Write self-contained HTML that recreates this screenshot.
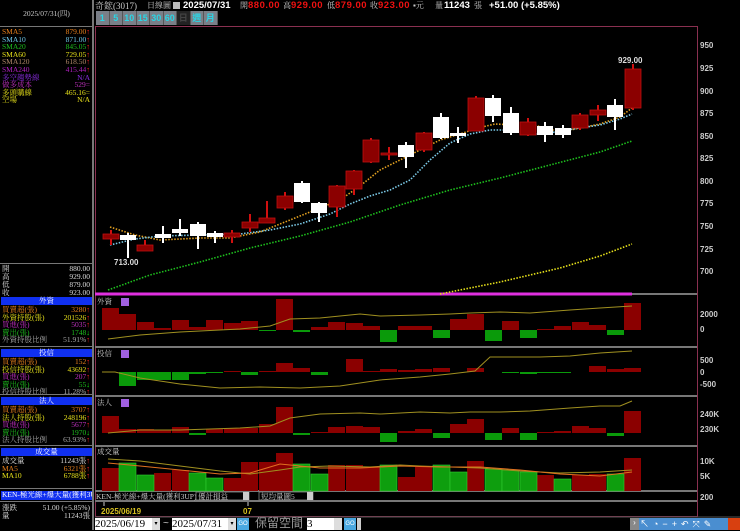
<!DOCTYPE html>
<html><head><meta charset="utf-8"><style>
*{margin:0;padding:0;box-sizing:border-box}
body{width:740px;height:530px;background:#000;overflow:hidden;position:relative;font-family:"Liberation Sans","Noto Sans CJK TC",sans-serif;color:#ddd}
.a{position:absolute;white-space:nowrap}
.s{font-family:"Liberation Serif","Noto Serif CJK SC",serif;font-size:7.5px;line-height:7.6px}
.r{position:absolute;left:2px;right:3px;height:7.6px}
.r span:last-child{position:absolute;right:0}
.hd{position:absolute;left:1px;width:91px;height:8px;background:#1030f0;color:#fff;font-size:7.5px;line-height:8px;text-align:center;font-family:"Liberation Serif","Noto Serif CJK SC",serif}
.btn{position:absolute;top:11px;height:14px;width:13.5px;background:#7a7f88;color:#29d6e6;font-weight:bold;font-size:9px;text-align:center;line-height:14px;border-right:1px solid #555}
.ax{position:absolute;left:700px;font-size:8px;font-weight:bold;color:#ccc}
.t{position:absolute;top:0;font-size:9.5px;line-height:11px;font-weight:bold;white-space:nowrap}
.c{position:absolute;top:1px;font-size:8px;line-height:10px;color:#ccc;font-family:"Liberation Serif","Noto Serif CJK SC",serif;white-space:nowrap}
</style></head><body>
<!-- top line -->
<div class="c" style="left:95px;font-size:9px">奇鋐(3017)</div>
<div class="c" style="left:147px">日線圖</div>
<div class="a" style="left:173px;top:2px;width:7px;height:7px;background:#bbb"></div>
<div class="t" style="left:183px;color:#fff">2025/07/31</div>
<div class="c" style="left:240px">開</div><div class="t" style="left:248px;color:#e11;letter-spacing:0.5px">880.00</div>
<div class="c" style="left:283px">高</div><div class="t" style="left:291px;color:#e11;letter-spacing:0.5px">929.00</div>
<div class="c" style="left:327px">低</div><div class="t" style="left:335px;color:#e11;letter-spacing:0.5px">879.00</div>
<div class="c" style="left:370px">收</div><div class="t" style="left:378px;color:#e11;letter-spacing:0.5px">923.00</div>
<div class="c" style="left:413px">▪元</div>
<div class="c" style="left:435px">量</div><div class="t" style="left:444px;color:#fff">11243</div>
<div class="c" style="left:474px">張</div>
<div class="t" style="left:489px;color:#fff">+51.00 (+5.85%)</div>

<div class="btn" style="left:96px">1</div><div class="btn" style="left:109.5px">5</div><div class="btn" style="left:123px">10</div><div class="btn" style="left:136.5px">15</div><div class="btn" style="left:150px">30</div><div class="btn" style="left:163.5px">60</div>
<div class="btn" style="left:177px;background:#222;color:#444">日</div><div class="btn" style="left:190.5px">週</div><div class="btn" style="left:204px">月</div>
<!-- left panel -->
<div class="a" style="left:0;top:0;width:94px;height:530px;border-right:2px solid #777"></div>
<div class="a" style="left:0;top:26px;width:93px;height:1px;background:#777"></div>
<div class="a s" style="left:0;top:10px;width:93px;text-align:center;color:#ccc">2025/07/31(四)</div>
<div class="a s" style="left:0;top:28px;width:93px;height:240px">
<div class="r" style="top:0;color:#e8801c"><span>SMA5</span><span>879.00<b style="color:#f22">↑</b></span></div>
<div class="r" style="top:7.6px;color:#6ec6e8"><span>SMA10</span><span>871.00<b style="color:#f22">↑</b></span></div>
<div class="r" style="top:15.2px;color:#1ec01e"><span>SMA20</span><span>845.05<b style="color:#f22">↑</b></span></div>
<div class="r" style="top:22.8px;color:#e6e01a"><span>SMA60</span><span>729.05<b style="color:#f22">↑</b></span></div>
<div class="r" style="top:30.4px;color:#b08868"><span>SMA120</span><span>618.50<b style="color:#f22">↑</b></span></div>
<div class="r" style="top:38px;color:#b020c0"><span>SMA240</span><span>415.44<b style="color:#f22">↑</b></span></div>
<div class="r" style="top:45.6px;color:#8a2ce0"><span>多空趨勢線</span><span>N/A</span></div>
<div class="r" style="top:53.2px;color:#c030c0"><span>做多成本</span><span>529=</span></div>
<div class="r" style="top:60.8px;color:#e6e01a"><span>多頭購線</span><span>465.16=</span></div>
<div class="r" style="top:68.4px;color:#e6e01a"><span>空場</span><span>N/A</span></div>
</div>
<div class="a" style="left:0;top:263px;width:93px;height:1px;background:#777"></div>
<div class="a s" style="left:0;top:265px;width:93px;height:40px;color:#ddd">
<div class="r" style="top:0"><span>開</span><span>880.00</span></div>
<div class="r" style="top:8px"><span>高</span><span>929.00</span></div>
<div class="r" style="top:16px"><span>低</span><span>879.00</span></div>
<div class="r" style="top:24px"><span>收</span><span>923.00</span></div>
</div>
<div class="hd" style="top:297px">外資</div>
<div class="a s" style="left:0;top:306px;width:93px;height:40px">
<div class="r" style="top:0;color:#e8801c"><span>買賣超(張)</span><span>3280<b style="color:#f22">↑</b></span></div>
<div class="r" style="top:7.6px;color:#e6e01a"><span>外資持股(張)</span><span>201526<b style="color:#f22">↑</b></span></div>
<div class="r" style="top:15.2px;color:#c030c0"><span>買進(張)</span><span>5035<b style="color:#f22">↑</b></span></div>
<div class="r" style="top:22.8px;color:#1ec01e"><span>賣出(張)</span><span>1748<b style="color:#1e1">↓</b></span></div>
<div class="r" style="top:30.4px;color:#aaa"><span>外資持股比例</span><span>51.91%<b style="color:#f22">↑</b></span></div>
</div>
<div class="a" style="left:0;top:346px;width:93px;height:1px;background:#777"></div>
<div class="hd" style="top:349px">投信</div>
<div class="a s" style="left:0;top:358px;width:93px;height:40px">
<div class="r" style="top:0;color:#e8801c"><span>買賣超(張)</span><span>152<b style="color:#f22">↑</b></span></div>
<div class="r" style="top:7.6px;color:#e6e01a"><span>投信持股(張)</span><span>43692<b style="color:#f22">↑</b></span></div>
<div class="r" style="top:15.2px;color:#c030c0"><span>買進(張)</span><span>207<b style="color:#f22">↑</b></span></div>
<div class="r" style="top:22.8px;color:#1ec01e"><span>賣出(張)</span><span>55<b style="color:#1e1">↓</b></span></div>
<div class="r" style="top:30.4px;color:#aaa"><span>投信持股比例</span><span>11.28%<b style="color:#f22">↑</b></span></div>
</div>
<div class="a" style="left:0;top:394px;width:93px;height:1px;background:#777"></div>
<div class="hd" style="top:397px">法人</div>
<div class="a s" style="left:0;top:406px;width:93px;height:40px">
<div class="r" style="top:0;color:#e8801c"><span>買賣超(張)</span><span>3707<b style="color:#f22">↑</b></span></div>
<div class="r" style="top:7.6px;color:#e6e01a"><span>法人持股(張)</span><span>248196<b style="color:#f22">↑</b></span></div>
<div class="r" style="top:15.2px;color:#c030c0"><span>買進(張)</span><span>5677<b style="color:#f22">↑</b></span></div>
<div class="r" style="top:22.8px;color:#1ec01e"><span>賣出(張)</span><span>1970<b style="color:#1e1">↓</b></span></div>
<div class="r" style="top:30.4px;color:#aaa"><span>法人持股比例</span><span>63.93%<b style="color:#f22">↑</b></span></div>
</div>
<div class="a" style="left:0;top:445px;width:93px;height:1px;background:#777"></div>
<div class="hd" style="top:448px">成交量</div>
<div class="a s" style="left:0;top:457px;width:93px;height:30px">
<div class="r" style="top:0;color:#ddd"><span>成交量</span><span>11243張<b style="color:#f22">↑</b></span></div>
<div class="r" style="top:7.6px;color:#e8801c"><span>MA5</span><span>6321張<b style="color:#f22">↑</b></span></div>
<div class="r" style="top:15.2px;color:#e6e01a"><span>MA10</span><span>6788張<b style="color:#f22">↑</b></span></div>
</div>
<div class="a" style="left:0;top:488px;width:93px;height:1px;background:#777"></div>
<div class="a s" style="left:1px;top:491px;width:91px;height:9px;background:#1030f0;color:#fff;padding-left:1px;overflow:hidden">KEN-極光線+爆大量(獲利3UP)</div>
<div class="a" style="left:0;top:501px;width:93px;height:1px;background:#777"></div>
<div class="a s" style="left:0;top:504px;width:93px;color:#ddd">
<div class="r" style="top:0"><span>漲跌</span><span>51.00 (+5.85%)</span></div>
<div class="r" style="top:8px"><span>量</span><span>11243張</span></div>
</div>

<svg class="a" style="left:0;top:0" width="740" height="530">
<rect x="95.5" y="26.5" width="602" height="490" fill="none" stroke="#8a3050"/>
<line x1="95" y1="294" x2="632" y2="294" stroke="#e030e0" stroke-width="3"/>
<line x1="632" y1="294" x2="697" y2="294" stroke="#777" stroke-width="2"/>
<g stroke="#777" stroke-width="2">
<line x1="95" y1="347" x2="697" y2="347"/><line x1="95" y1="396" x2="697" y2="396"/><line x1="95" y1="446" x2="697" y2="446"/><line x1="95" y1="491" x2="697" y2="491"/><line x1="95" y1="501" x2="697" y2="501"/>
</g>
<g fill="none" stroke-dasharray="1.5 1.5" stroke-width="1.6">
<polyline stroke="#e2a020" points="110,227 135,235 160,240 200,238 230,238 260,232 285,222 310,212 340,200 360,186 380,170 400,160 420,150 440,140 460,134 478,128 495,124 515,125 530,124 545,128 560,132 580,128 600,124 620,117 632,108"/>
<polyline stroke="#7ccbe8" points="110,245 135,239 160,236 200,235 240,234 270,230 300,224 330,214 350,204 370,196 390,190 410,180 430,160 450,143 470,134 490,130 510,130 530,134 545,134 560,131 580,128 600,125 620,119 632,114"/>
<polyline stroke="#1ec01e" points="108,290 150,275 200,262 250,248 300,236 350,222 400,205 450,190 500,178 550,165 600,152 632,141"/>
<polyline stroke="#e6e01a" points="440,294 500,282 560,268 600,256 632,244"/>
</g>
<g stroke-width="2">
<g stroke="#d01010"><line x1="111" y1="230" x2="111" y2="245"/><line x1="145" y1="240" x2="145" y2="251"/><line x1="232" y1="230" x2="232" y2="243"/><line x1="250" y1="214" x2="250" y2="232"/><line x1="267" y1="201" x2="267" y2="223"/><line x1="285" y1="192" x2="285" y2="210"/><line x1="337" y1="185" x2="337" y2="217"/><line x1="354" y1="170" x2="354" y2="195"/><line x1="371" y1="138" x2="371" y2="163"/><line x1="389" y1="147" x2="389" y2="160"/><line x1="424" y1="132" x2="424" y2="152"/><line x1="476" y1="96" x2="476" y2="131"/><line x1="528" y1="118" x2="528" y2="136"/><line x1="580" y1="113" x2="580" y2="130"/><line x1="598" y1="105" x2="598" y2="121"/><line x1="633" y1="64" x2="633" y2="110"/></g>
<g stroke="#fff"><line x1="128" y1="233" x2="128" y2="258"/><line x1="163" y1="226" x2="163" y2="243"/><line x1="180" y1="219" x2="180" y2="236"/><line x1="198" y1="222" x2="198" y2="249"/><line x1="215" y1="231" x2="215" y2="243"/><line x1="302" y1="181" x2="302" y2="203"/><line x1="319" y1="202" x2="319" y2="222"/><line x1="406" y1="142" x2="406" y2="168"/><line x1="441" y1="113" x2="441" y2="139"/><line x1="458" y1="127" x2="458" y2="143"/><line x1="493" y1="95" x2="493" y2="122"/><line x1="511" y1="107" x2="511" y2="135"/><line x1="545" y1="122" x2="545" y2="142"/><line x1="563" y1="125" x2="563" y2="138"/><line x1="615" y1="99" x2="615" y2="130"/></g>
</g>
<g fill="#8b0000" stroke="#c01010" stroke-width="0.8">
<rect x="103" y="234" width="16" height="5"/><rect x="137" y="245" width="16" height="6"/><rect x="224" y="233" width="16" height="4"/><rect x="242" y="222" width="16" height="6"/><rect x="259" y="218" width="16" height="5"/><rect x="277" y="196" width="16" height="12"/><rect x="329" y="186" width="16" height="21"/><rect x="346" y="171" width="16" height="18"/><rect x="363" y="140" width="16" height="22"/><rect x="381" y="153" width="16" height="2"/><rect x="416" y="133" width="16" height="17"/><rect x="468" y="98" width="16" height="33"/><rect x="520" y="122" width="16" height="13"/><rect x="572" y="115" width="16" height="13"/><rect x="590" y="110" width="16" height="5"/><rect x="625" y="69" width="16" height="39"/>
</g>
<g fill="#fff">
<rect x="120" y="235" width="16" height="5"/><rect x="155" y="234" width="16" height="4"/><rect x="172" y="229" width="16" height="4"/><rect x="190" y="224" width="16" height="12"/><rect x="207" y="233" width="16" height="4"/><rect x="294" y="183" width="16" height="19"/><rect x="311" y="203" width="16" height="10"/><rect x="398" y="145" width="16" height="12"/><rect x="433" y="117" width="16" height="21"/><rect x="450" y="133" width="16" height="3"/><rect x="485" y="98" width="16" height="18"/><rect x="503" y="113" width="16" height="20"/><rect x="537" y="126" width="16" height="9"/><rect x="555" y="128" width="16" height="7"/><rect x="607" y="105" width="16" height="12"/>
</g>
<text x="618" y="63" fill="#ddd" font-size="8" font-weight="bold" font-family="Liberation Sans">929.00</text>
<text x="114" y="265" fill="#ddd" font-size="8" font-weight="bold" font-family="Liberation Sans">713.00</text>
<g font-size="7.5" fill="#ccc" font-family="Liberation Serif,Noto Serif CJK SC,serif">
<text x="97" y="304">外資</text><text x="97" y="356">投信</text><text x="97" y="405">法人</text><text x="97" y="454">成交量</text>
<text x="96" y="499">KEN-極光線+爆大量(獲利3UP)</text>
</g>
<g fill="#a060e0"><rect x="121" y="298" width="8" height="8"/><rect x="121" y="350" width="8" height="8"/><rect x="121" y="399" width="8" height="8"/></g>
<g fill="#8b0000"><rect x="102" y="308" width="17" height="22"/><rect x="119" y="314" width="17" height="16"/><rect x="137" y="322" width="17" height="8"/><rect x="154" y="328" width="17" height="2"/><rect x="172" y="320" width="17" height="10"/><rect x="189" y="327" width="17" height="3"/><rect x="206" y="320" width="17" height="10"/><rect x="224" y="323" width="17" height="7"/><rect x="241" y="321" width="17" height="9"/><rect x="276" y="299" width="17" height="31"/><rect x="311" y="327" width="17" height="3"/><rect x="328" y="322" width="17" height="8"/><rect x="346" y="323" width="17" height="7"/><rect x="363" y="326" width="17" height="4"/><rect x="398" y="326" width="17" height="4"/><rect x="415" y="326" width="17" height="4"/><rect x="450" y="319" width="17" height="11"/><rect x="467" y="314" width="17" height="16"/><rect x="502" y="321" width="17" height="9"/><rect x="537" y="329" width="17" height="1"/><rect x="554" y="326" width="17" height="4"/><rect x="572" y="322" width="17" height="8"/><rect x="589" y="325" width="17" height="5"/><rect x="624" y="303" width="17" height="27"/></g>
<g fill="#0a9a0a"><rect x="259" y="330" width="17" height="1"/><rect x="293" y="330" width="17" height="2"/><rect x="380" y="330" width="17" height="12"/><rect x="433" y="330" width="17" height="8"/><rect x="485" y="330" width="17" height="11"/><rect x="520" y="330" width="17" height="8"/><rect x="607" y="330" width="17" height="5"/></g>
<polyline fill="none" stroke="#a09020" points="108,339 140,335 180,332 240,329 270,326 290,319 320,318 360,314 380,316 420,315 450,314 470,313 500,312 530,313 570,310 600,308 632,306"/>
<g fill="#0a9a0a"><rect x="119" y="372" width="17" height="14"/><rect x="137" y="372" width="17" height="8"/><rect x="154" y="372" width="17" height="8"/><rect x="172" y="372" width="17" height="8"/><rect x="189" y="372" width="17" height="2"/><rect x="206" y="372" width="17" height="1"/><rect x="241" y="372" width="17" height="3"/><rect x="311" y="372" width="17" height="3"/><rect x="502" y="372" width="17" height="1"/><rect x="520" y="372" width="17" height="2"/><rect x="537" y="372" width="17" height="1"/><rect x="554" y="372" width="17" height="1"/></g>
<g fill="#8b0000"><rect x="224" y="371" width="17" height="1"/><rect x="259" y="371" width="17" height="1"/><rect x="276" y="363" width="17" height="9"/><rect x="293" y="368" width="17" height="4"/><rect x="346" y="359" width="17" height="13"/><rect x="363" y="371" width="17" height="1"/><rect x="380" y="369" width="17" height="3"/><rect x="398" y="370" width="17" height="2"/><rect x="415" y="369" width="17" height="3"/><rect x="433" y="368" width="17" height="4"/><rect x="467" y="368" width="17" height="4"/><rect x="589" y="366" width="17" height="6"/><rect x="607" y="369" width="17" height="3"/><rect x="624" y="368" width="17" height="4"/></g>
<polyline fill="none" stroke="#a09020" points="102,372 115,372 140,378 180,384 220,388 260,387 300,388 340,386 380,380 420,377 450,374 475,371 490,357 510,357 540,357 570,356 600,353 632,351"/>
<g fill="#8b0000"><rect x="102" y="416" width="17" height="17"/><rect x="119" y="429" width="17" height="4"/><rect x="137" y="429" width="17" height="4"/><rect x="154" y="430" width="17" height="3"/><rect x="172" y="427" width="17" height="6"/><rect x="206" y="429" width="17" height="4"/><rect x="224" y="428" width="17" height="5"/><rect x="241" y="428" width="17" height="5"/><rect x="259" y="424" width="17" height="9"/><rect x="276" y="407" width="17" height="26"/><rect x="311" y="432" width="17" height="1"/><rect x="328" y="427" width="17" height="6"/><rect x="346" y="426" width="17" height="7"/><rect x="363" y="427" width="17" height="6"/><rect x="398" y="431" width="17" height="2"/><rect x="415" y="429" width="17" height="4"/><rect x="450" y="424" width="17" height="9"/><rect x="467" y="419" width="17" height="14"/><rect x="502" y="428" width="17" height="5"/><rect x="537" y="432" width="17" height="1"/><rect x="554" y="431" width="17" height="2"/><rect x="572" y="426" width="17" height="7"/><rect x="589" y="428" width="17" height="5"/><rect x="624" y="411" width="17" height="22"/></g>
<g fill="#0a9a0a"><rect x="189" y="433" width="17" height="2"/><rect x="293" y="433" width="17" height="2"/><rect x="380" y="433" width="17" height="9"/><rect x="433" y="433" width="17" height="5"/><rect x="485" y="433" width="17" height="7"/><rect x="520" y="433" width="17" height="7"/><rect x="607" y="433" width="17" height="3"/></g>
<polyline fill="none" stroke="#a09020" points="108,433 140,430 180,430 240,428 270,426 290,418 320,414 360,413 380,414 420,412 450,413 470,412 500,412 530,411 570,408 600,406 620,406 632,401"/>
<g fill="#8b0000"><rect x="102" y="468" width="17" height="23"/><rect x="154" y="473" width="17" height="18"/><rect x="172" y="470" width="17" height="21"/><rect x="224" y="478" width="17" height="13"/><rect x="241" y="462" width="17" height="29"/><rect x="259" y="462" width="17" height="29"/><rect x="276" y="453" width="17" height="38"/><rect x="328" y="465" width="17" height="26"/><rect x="346" y="465" width="17" height="26"/><rect x="363" y="467" width="17" height="24"/><rect x="398" y="477" width="17" height="14"/><rect x="415" y="467" width="17" height="24"/><rect x="467" y="461" width="17" height="30"/><rect x="537" y="475" width="17" height="16"/><rect x="572" y="475" width="17" height="16"/><rect x="589" y="474" width="17" height="17"/><rect x="624" y="458" width="17" height="33"/></g>
<g fill="#0e9e0e" stroke="#3c3" stroke-width="0.6"><rect x="119" y="463" width="17" height="28"/><rect x="137" y="475" width="17" height="16"/><rect x="189" y="473" width="17" height="18"/><rect x="206" y="478" width="17" height="13"/><rect x="293" y="464" width="17" height="27"/><rect x="311" y="474" width="17" height="17"/><rect x="380" y="465" width="17" height="26"/><rect x="433" y="465" width="17" height="26"/><rect x="450" y="472" width="17" height="19"/><rect x="485" y="469" width="17" height="22"/><rect x="502" y="470" width="17" height="21"/><rect x="520" y="472" width="17" height="19"/><rect x="554" y="479" width="17" height="12"/><rect x="607" y="474" width="17" height="17"/></g>
<polyline fill="none" stroke="#a09020" points="108,459 140,461 180,466 220,471 250,474 280,470 300,467 330,466 370,467 400,465 420,466 450,467 480,468 520,471 560,473 600,472 632,470"/>
<polyline fill="none" stroke="#e07020" points="108,463 140,466 180,470 220,474 250,473 280,464 320,468 360,468 400,466 440,467 480,467 520,470 560,474 600,476 632,472"/>
<rect x="196" y="492" width="53" height="8" fill="#000" stroke="#888" stroke-width="0.8"/><rect x="243" y="492" width="6" height="8" fill="#ccc"/>
<rect x="259" y="492" width="54" height="8" fill="#000" stroke="#888" stroke-width="0.8"/><rect x="307" y="492" width="6" height="8" fill="#ccc"/>
<g font-size="7.5" fill="#ccc" font-family="Liberation Serif,Noto Serif CJK SC,serif"><text x="198" y="499">優計損益</text><text x="261" y="499">短均量圖5</text></g>
<line x1="104" y1="502" x2="104" y2="506" stroke="#ccc"/><line x1="248" y1="502" x2="248" y2="506" stroke="#ccc"/>
<g font-size="8" font-weight="bold" fill="#d6c020" font-family="Liberation Sans"><text x="101" y="514">2025/06/19</text><text x="243" y="514">07</text></g>
<line x1="95" y1="517" x2="740" y2="517" stroke="#555"/>
</svg>
<div class="ax" style="top:41px">950</div><div class="ax" style="top:64px">925</div><div class="ax" style="top:87px">900</div><div class="ax" style="top:109px">875</div><div class="ax" style="top:132px">850</div><div class="ax" style="top:154px">825</div><div class="ax" style="top:177px">800</div><div class="ax" style="top:199px">775</div><div class="ax" style="top:222px">750</div><div class="ax" style="top:245px">725</div><div class="ax" style="top:267px">700</div>
<div class="ax" style="top:310px">2000</div><div class="ax" style="top:325px">0</div>
<div class="ax" style="top:356px">500</div><div class="ax" style="top:368px">0</div><div class="ax" style="top:380px">-500</div>
<div class="ax" style="top:410px">240K</div><div class="ax" style="top:425px">230K</div>
<div class="ax" style="top:457px">10K</div><div class="ax" style="top:472px">5K</div>
<div class="ax" style="top:493px">200</div>
<div class="a" style="left:95px;top:518px;width:65px;height:12px;background:#fff;color:#000;font-family:'Liberation Serif',serif;font-size:11px;line-height:12px">2025/06/19<span style="position:absolute;right:0;top:0;width:8px;height:12px;background:#ddd;font-size:6px;text-align:center">▾</span></div>
<div class="a" style="left:163px;top:518px;color:#ccc;font-size:10px">~</div>
<div class="a" style="left:172px;top:518px;width:64px;height:12px;background:#fff;color:#000;font-family:'Liberation Serif',serif;font-size:11px;line-height:12px">2025/07/31<span style="position:absolute;right:0;top:0;width:8px;height:12px;background:#ddd;font-size:6px;text-align:center">▾</span></div>
<div class="a" style="left:237px;top:518px;width:12px;height:12px;background:#4aa8e0;color:#fff;font-size:6px;line-height:12px;text-align:center">GO</div>
<div class="a" style="left:255px;top:516px;color:#999;font-size:12px;font-family:'Noto Sans CJK TC',sans-serif;line-height:14px">保留空間</div>
<div class="a" style="left:307px;top:518px;width:35px;height:12px;background:#fff;color:#000;font-size:11px;line-height:12px;font-family:'Liberation Serif',serif">3<span style="position:absolute;right:0;top:0;width:8px;height:12px;background:#ddd"></span></div>
<div class="a" style="left:344px;top:518px;width:12px;height:12px;background:#4aa8e0;color:#fff;font-size:6px;line-height:12px;text-align:center">GO</div>
<div class="a" style="left:357px;top:518px;width:4px;height:12px;background:#ccc"></div>
<div class="a" style="left:630px;top:518px;width:110px;height:12px;background:#4a8ed0"></div>
<div class="a" style="left:630px;top:518px;width:9px;height:12px;background:#888;color:#fff;font-size:8px;text-align:center">›</div>
<div class="a" style="left:728px;top:518px;width:12px;height:12px;background:#d84010"></div>
<div class="a" style="left:640px;top:518px;width:88px;height:12px;color:#fff;font-size:9px;line-height:12px;letter-spacing:4px">↖◔−+↶⤧✎</div>
</body></html>
